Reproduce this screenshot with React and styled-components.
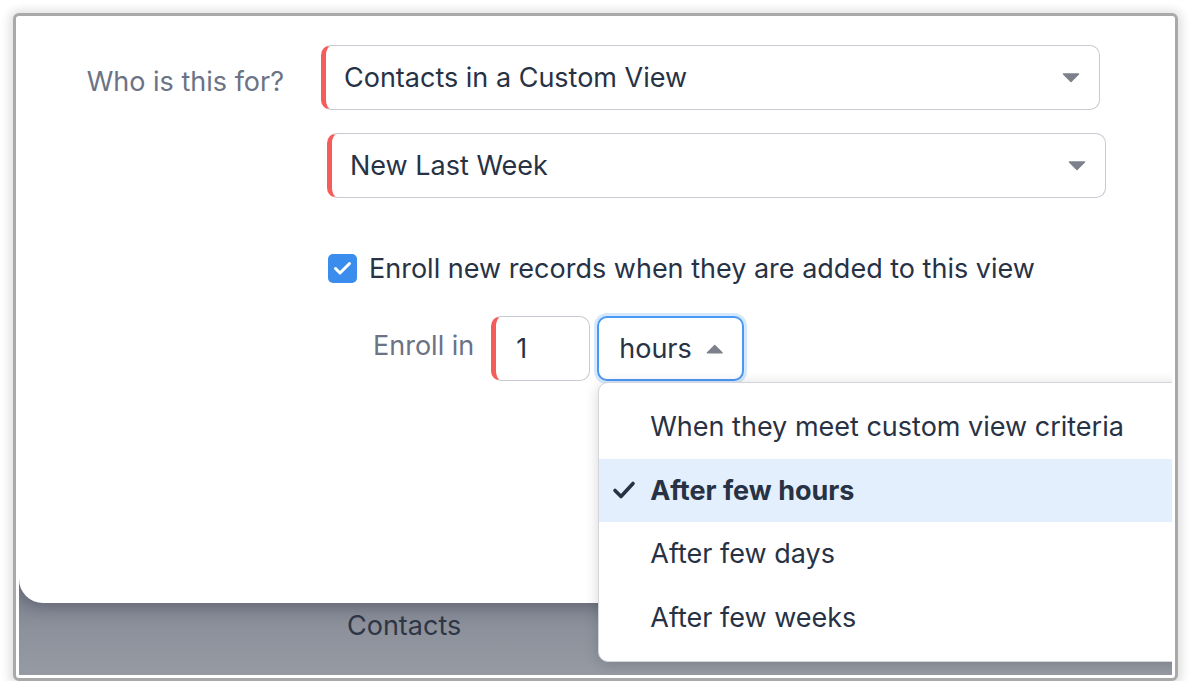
import React from 'react';
import styled, { createGlobalStyle } from 'styled-components';

const GlobalStyle = createGlobalStyle`
  html, body {
    margin: 0;
    background: #ffffff;
  }

  body {
    font-family: Inter, "Noto Sans", sans-serif;
    color: #283245;
  }
`;

const Frame = styled.div`
  margin: 13px 0 0 13px;
  width: 1165px;
  height: 668px;
  box-sizing: border-box;
  padding: 3px;
  border: 3px solid #a9a9a9;
  border-radius: 6px;
  background: #ffffff;
  box-shadow: 0 1px 10px 4px rgba(0, 0, 0, 0.12);
`;

const Screen = styled.div`
  position: relative;
  display: flex;
  flex-direction: column;
  width: 100%;
  height: 100%;
  overflow: hidden;
  background: linear-gradient(#676d7d 0%, #7a808e 88%, #8c919b 93%, #959aa3 100%);
`;

const Modal = styled.div`
  height: 584px;
  flex-shrink: 0;
  box-sizing: border-box;
  padding-top: 26px;
  background: #ffffff;
  border-bottom-left-radius: 24px;
  box-shadow: 0 4px 14px rgba(0, 0, 0, 0.2);
`;

const FieldRow = styled.div`
  display: flex;
  align-items: flex-start;
`;

const Label = styled.div`
  flex-shrink: 0;
  width: ${p => p.width || 265}px;
  padding-top: ${p => p.offset || 0}px;
  line-height: 65px;
  text-align: right;
  font-size: 27px;
  color: #6b7385;
  white-space: nowrap;
`;

const Controls = styled.div`
  display: flex;
  flex-direction: column;
  align-items: flex-start;
  margin-left: 37px;
`;

const Select = styled.div`
  display: flex;
  align-items: center;
  justify-content: space-between;
  box-sizing: border-box;
  width: ${p => p.width}px;
  height: 65px;
  margin-top: ${p => p.top || 0}px;
  margin-left: ${p => p.shift || 0}px;
  padding: 0 19px 0 ${p => (p.required ? 18 : 20)}px;
  background: #ffffff;
  border: 1.5px solid #c6cad1;
  border-left: ${p => (p.required ? '5px solid #f55d5b' : '1.5px solid #c6cad1')};
  border-radius: 10px;
  font-size: 27px;
  color: #283245;
  white-space: nowrap;
`;

const FocusSelect = styled(Select)`
  border: 2px solid #4a98f5;
  box-shadow: 0 0 0 3px rgba(74, 152, 245, 0.22);
  padding: 0 19px 0 20px;
  gap: 14px;
`;

const NumberInput = styled.div`
  display: flex;
  align-items: center;
  box-sizing: border-box;
  width: 99px;
  height: 65px;
  padding-left: 20px;
  border: 1.5px solid #c6cad1;
  border-left: 5px solid #f55d5b;
  border-radius: 10px;
  font-size: 27px;
  color: #283245;
`;

const CheckRow = styled.label`
  display: flex;
  align-items: center;
  gap: 12px;
  margin: 54px 0 0 7px;
  font-size: 27px;
  color: #283245;
  white-space: nowrap;
`;

const CheckBox = styled.span`
  display: flex;
  align-items: center;
  justify-content: center;
  width: 29px;
  height: 29px;
  border-radius: 5px;
  background: #3b8ded;
`;

const EnrollRow = styled.div`
  display: flex;
  align-items: flex-start;
  gap: 7px;
  margin: 31px 0 0 52px;
`;

const EnrollLabel = styled.div`
  margin-right: 10px;
  line-height: 59px;
  font-size: 27px;
  color: #6b7385;
  white-space: nowrap;
`;

const DropdownWrap = styled.div`
  position: relative;
`;

const Menu = styled.ul`
  position: absolute;
  top: calc(100% + 1px);
  left: 1px;
  z-index: 10;
  width: 600px;
  margin: 0;
  padding: 12px 0 12px;
  list-style: none;
  background: #ffffff;
  border: 1px solid #d3d6db;
  border-radius: 10px;
  box-shadow: 0 2px 14px rgba(0, 0, 0, 0.16);
`;

const MenuItem = styled.li`
  display: flex;
  align-items: center;
  height: 63.5px;
  padding-left: 51px;
  position: relative;
  background: ${p => (p.selected ? '#e3effc' : 'transparent')};
  font-size: 27px;
  font-weight: ${p => (p.selected ? 700 : 400)};
  color: #283245;
  white-space: nowrap;
`;

const MenuCheck = styled.svg`
  position: absolute;
  left: 13px;
  top: 50%;
  transform: translateY(-50%);
`;

const Footer = styled.div`
  flex: 1;
  padding-left: 328px;
  padding-top: 7px;
  line-height: 32px;
  font-size: 27px;
  color: #2e3545;
`;

const Caret = ({ up }) => (
  <svg width="18" height="10" viewBox="0 0 18 10">
    <path
      d={up ? 'M1.5 9 L16.5 9 L9 1.5 Z' : 'M1.5 1 L16.5 1 L9 8.5 Z'}
      fill="#7c818b"
      stroke="#7c818b"
      strokeWidth="1.5"
      strokeLinejoin="round"
    />
  </svg>
);

const options = [
  'When they meet custom view criteria',
  'After few hours',
  'After few days',
  'After few weeks',
];

const App = () => (
  <>
    <GlobalStyle />
    <Frame>
      <Screen>
        <Modal>
          <FieldRow>
            <Label offset={4}>Who is this for?</Label>
            <Controls>
              <Select required width={779}>
                <span>Contacts in a Custom View</span>
                <Caret />
              </Select>
              <Select required width={779} top={23} shift={6}>
                <span>New Last Week</span>
                <Caret />
              </Select>

              <CheckRow>
                <CheckBox>
                  <svg width="19" height="15" viewBox="0 0 19 15">
                    <polyline
                      points="2.5,7.5 7,12 16.5,2.5"
                      fill="none"
                      stroke="#ffffff"
                      strokeWidth="3"
                      strokeLinecap="round"
                      strokeLinejoin="round"
                    />
                  </svg>
                </CheckBox>
                Enroll new records when they are added to this view
              </CheckRow>

              <EnrollRow>
                <EnrollLabel>Enroll in</EnrollLabel>
                <NumberInput>1</NumberInput>
                <DropdownWrap>
                  <FocusSelect width={147}>
                    <span>hours</span>
                    <Caret up />
                  </FocusSelect>
                  <Menu>
                    {options.map(option => (
                      <MenuItem key={option} selected={option === 'After few hours'}>
                        {option === 'After few hours' && (
                          <MenuCheck width="24" height="19" viewBox="0 0 24 19">
                            <polyline
                              points="3,10 9,16 21,3"
                              fill="none"
                              stroke="#283245"
                              strokeWidth="3.6"
                              strokeLinecap="round"
                              strokeLinejoin="round"
                            />
                          </MenuCheck>
                        )}
                        {option}
                      </MenuItem>
                    ))}
                  </Menu>
                </DropdownWrap>
              </EnrollRow>
            </Controls>
          </FieldRow>
        </Modal>
        <Footer>Contacts</Footer>
      </Screen>
    </Frame>
  </>
);

export default App;
